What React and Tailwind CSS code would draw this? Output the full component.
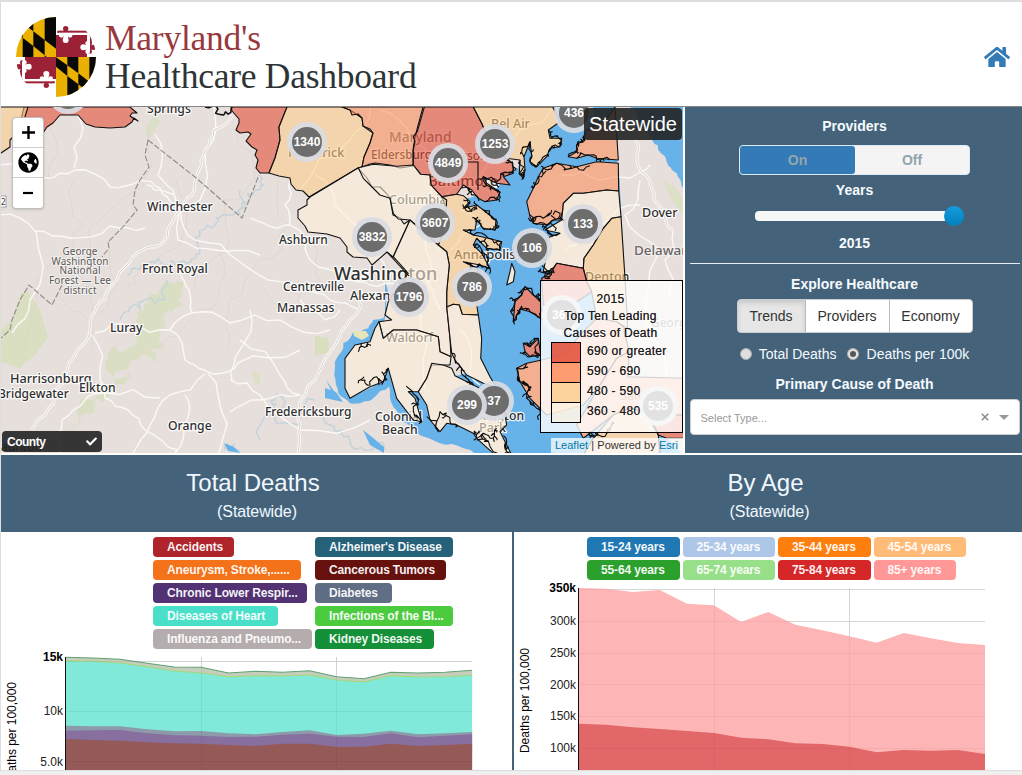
import React from "react";
import { FaCheck, FaGlobeAmericas, FaHome } from "react-icons/fa";

/* ---------- geometry helpers ---------- */

function makeRandom(seed) {
  let s = seed;
  return () => {
    s = (s * 16807) % 2147483647;
    return s / 2147483647 - 0.5;
  };
}

// Midpoint displacement gives borders and shores a ragged outline.
function rough(points, depth, amount, seed) {
  const rnd = makeRandom(seed);
  let pts = points;
  for (let d = 0; d < depth; d++) {
    const next = [];
    for (let i = 0; i < pts.length - 1; i++) {
      const [x1, y1] = pts[i];
      const [x2, y2] = pts[i + 1];
      const k = rnd() * amount;
      next.push(pts[i], [(x1 + x2) / 2 - (y2 - y1) * k, (y1 + y2) / 2 + (x2 - x1) * k]);
    }
    next.push(pts[pts.length - 1]);
    pts = next;
  }
  return pts;
}

// Short creeks that branch off a shoreline.
function withCreeks(points, seed, length) {
  const rnd = makeRandom(seed * 7 + 3);
  return points.flatMap((p) => {
    if (rnd() < 0.05) return [p];
    const q = [p[0] + rnd() * length, p[1] + rnd() * length];
    const r = [q[0] + rnd() * length * 0.6, q[1] + rnd() * length * 0.6];
    return [p, q, r, q, p];
  });
}

const parse = (s) => s.trim().split(/\s+/).map((p) => p.split(",").map(Number));
// The bay region is digitised on a grid three times finer than the map.
const fine = (s) => parse(s).map(([x, y]) => [330 + x / 3, 105 + y / 3]);
const toPath = (pts) => "M" + pts.map((p) => p[0].toFixed(1) + " " + p[1].toFixed(1)).join("L");
const ring = (s) => toPath(parse(s)) + "Z";
const line = (s) => toPath(parse(s));
const shore = (s, seed, amount = 1.3, depth = 3) => toPath(rough(parse(s), depth, amount, seed));
const creeks = (s, seed, length = 7) => toPath(withCreeks(rough(fine(s), 2, 0.6, seed), seed, length));

const CREAM = "#fef0d9";
const TAN = "#fdcc8a";
const ORANGE = "#fc8d59";
const RED = "#e34a33";

const westCounties = [
  [RED, "24,107 20,124 34,134 43,133 47,127 53,123 60,115 78,115 86,124 95,127 110,128 125,127 132,122 134,118 138,121 130,116 132,113 137,113 130,107"],
  [TAN, "-2,107 28,107 24,120 20,130 13,137 10,140 10,147 -2,155"],
  [RED, "231,107 232,111 239,119 239,123 236,130 240,133 248,132 251,134 246,141 252,147 257,150 255,155 258,160 256,168 260,173 269,173 275,158 280,140 279,127 287,107"],
  [TAN, "287,107 279,127 280,140 275,158 269,173 279,176 290,178 291,184 296,190 303,191 309,197 358,168 362,167 364,157 370,143 373,133 363,126 362,118 350,110 342,107"],
  [ORANGE, "342,107 350,110 352,115 358,114 362,118 363,126 370,129 373,133 370,143 364,157 362,167 370,164 375,163 390,165 400,168 413,166 413,150 415,137 423,107"],
  [CREAM, "310,197 358,168 367,178 372,187 380,187 386,193 390,198 393,215 400,218 404,224 410,220 393,257 387,252 372,265 367,258 353,257 347,252 347,247 340,238 327,234 308,232 305,226 298,218 298,210 307,205 307,200"],
].map(([fill, s]) => [fill, parse(s)]);

const bayCounties = [
  [RED, "283,6 262,80 250,95 255,110 250,135 250,180 272,208 300,210 303,240 335,275 380,268 400,240 425,255 445,280 465,290 500,285 510,262 470,235 460,215 500,235 540,240 520,215 550,205 548,175 530,160 485,120 470,90 455,55 430,6"],
  [TAN, "430,6 455,55 470,90 485,120 530,160 570,165 568,205 580,220 585,195 582,155 600,110 605,150 600,170 620,185 650,155 660,130 690,125 695,100 660,100 655,75 690,50 668,6"],
  [TAN, "335,275 380,268 400,272 420,290 400,310 440,300 460,315 485,335 498,345 495,375 460,370 440,345 435,375 400,375 430,390 475,400 515,410 510,435 470,430 440,400 430,420 455,445 480,490 450,480 400,470 440,490 455,520 440,600 445,630 397,628 388,600 370,598 350,608 350,560 358,480 350,440 325,420 345,370 345,300"],
  [CREAM, "85,188 130,178 200,184 250,180 272,208 300,210 303,240 335,275 350,285 345,370 325,420 280,380 240,345 205,342 190,325 180,280 150,270 120,240 100,220"],
  [CREAM, "240,345 280,380 325,420 350,440 358,480 350,560 350,605 360,700 363,755 330,740 325,695 260,675 190,675 160,700 147,650 185,645 165,630 175,590 235,505 190,455"],
  [CREAM, "147,650 160,700 190,675 260,675 325,695 330,740 363,755 360,780 305,780 290,820 265,860 235,860 255,880 275,950 250,945 200,880 175,790 160,830 120,845 60,880 45,850 45,760 75,720 120,710 135,670"],
  [CREAM, "265,860 290,820 305,775 340,780 365,790 375,812 430,840 470,860 520,900 530,960 510,980 545,1050 490,1045 440,1000 430,985 380,960 350,955 330,980 300,945 290,900"],
  [CREAM, "350,605 370,598 388,600 397,628 445,630 455,700 452,760 480,815 500,850 460,835 410,810 375,765 365,745 360,700"],
  [ORANGE, "765,80 760,105 740,120 740,140 715,155 740,160 775,150 800,160 865,165 855,6 830,40"],
  [ORANGE, "865,175 800,170 740,185 680,175 640,190 625,215 610,250 590,290 600,335 610,355 650,360 670,345 690,345 700,310 700,295 730,265 760,265 830,255 866,258"],
  [CREAM, "866,258 830,255 760,265 730,265 700,295 695,345 645,375 690,385 650,400 650,450 640,500 665,495 680,475 760,490 762,460 790,420 820,370 845,340 873,335"],
  [CREAM, "545,475 555,500 550,530 530,540 540,500"],
  [TAN, "873,335 845,340 820,370 790,420 762,460 760,490 770,530 785,560 800,640 860,650 893,670 885,520"],
  [RED, "680,475 760,490 770,530 785,560 740,590 640,600 635,520 665,500"],
  [RED, "585,545 610,570 632,590 632,640 600,620 570,612 550,650 555,590 575,570"],
  [ORANGE, "590,775 635,765 700,750 760,680 800,640 860,650 880,665 897,740 860,760 810,840 760,900 650,930 600,880 570,830 560,790"],
  [RED, "580,715 600,725 625,700 632,750 600,755 585,740"],
  [ORANGE, "895,815 1064,820 1064,930 960,930 900,910 850,930 760,1000 740,960 810,840 860,760 897,740"],
  [TAN, "790,1000 850,930 900,910 945,920 985,990 990,1050 760,1050"],
  [RED, "960,930 1064,930 1064,1000 1010,1000 985,990"],
].map(([fill, s]) => [fill, fine(s)]);

const countyPaths = [...westCounties, ...bayCounties].map(([fill, pts]) => [fill, toPath(pts) + "Z"]);

const coasts = [
  creeks("400,285 420,295 405,310 430,315 440,300", 41, 6),
  creeks("460,315 485,335 498,345 495,375 460,370 440,345 435,340", 97, 5),
  creeks("400,375 430,390 475,400 515,410 510,435 470,430 440,400", 913, 6),
  creeks("430,420 455,445 480,490 450,480 410,475", 321, 7),
  creeks("395,250 415,255 425,270 445,280", 77, 6),
  creeks("465,290 500,285 510,262 480,245 460,215 500,235", 661, 6),
  creeks("500,230 540,205 550,195 548,175 530,165", 88, 7),
  creeks("570,165 568,205 580,220 585,195", 1234, 4),
  creeks("582,155 600,110 605,150 600,170 620,185 650,150", 211, 5),
  creeks("655,140 685,125 695,105 665,98 655,75", 311, 5),
  creeks("770,85 745,110 740,140 715,155", 811, 6),
  creeks("740,160 775,150 800,163 840,165", 555, 4),
  creeks("780,182 740,185 680,175 640,190 625,215 610,250", 556, 5),
  creeks("600,330 610,355 650,360 670,345 690,325", 656, 12),
  creeks("605,350 640,340 665,315", 515, 10),
  creeks("690,385 650,370 640,365", 711, 8),
  creeks("635,480 645,520 665,500 630,500", 1717, 10),
  creeks("585,545 610,570 632,590 632,640 600,620 570,612 550,650 555,590 575,570 585,545", 1811, 8),
  creeks("580,715 600,725 625,700 632,750 600,755 585,740", 1911, 8),
  creeks("590,775 560,790 570,830 600,850", 2011, 8),
  creeks("575,830 590,880 620,910 625,945", 2111, 6),
  creeks("85,740 100,725 115,718", 2211, 5),
  creeks("85,835 105,825 120,840 140,815 160,830 175,790", 2311, 5),
  creeks("235,860 255,870 265,900 250,905 275,950", 2411, 8),
  creeks("290,935 325,980 330,920 360,950 380,960", 2511, 8),
  creeks("365,745 375,765 395,790 410,820 430,840", 2611, 6),
  creeks("430,985 440,1000 460,985 490,1000 500,970", 2711, 8),
  creeks("440,1005 490,1040 540,1045 530,1010", 2811, 9),
  creeks("780,1000 800,990 830,985 850,950", 2911, 7),
];

const roads = [
  "236,107 214,130 205,150 199,170 192,195 181,210 170,225 160,245 143,250 125,267 108,290 97,306 90,330 75,355 55,390 45,415 32,430",
  "362,290 350,320 335,345 322,365 305,395 300,425 298,453",
  "634,138 637,160 646,175 654,200 665,218 673,230",
  "214,107 205,150 200,200 181,210 195,240 240,262 300,285 330,300 360,310",
  "0,165 45,178 75,170 110,187 140,180 160,188 175,205",
  "0,215 35,231 70,238 110,226 145,228",
  "65,107 83,128 74,168",
  "36,231 30,300 12,333",
  "147,185 155,190 175,195",
  "155,134 158,175 173,190 178,240 215,250 260,255",
  "95,333 130,327 170,330 192,313 189,290 180,270",
  "192,313 230,323 280,320 330,330",
  "92,335 100,380 105,398 128,410 145,430 178,450",
  "170,330 185,360 205,370 215,374 238,363 300,350",
  "205,374 170,395 150,425 133,453",
  "208,374 218,395 219,453",
  "185,395 187,420 175,453",
  "60,453 62,420 85,400 105,393 160,398",
  "230,380 260,395 300,430 370,420",
  "240,340 280,375 300,395 260,400 230,412",
  "290,180 285,205 290,225 275,228 250,218",
  "290,225 310,260 345,280 370,285 400,285",
  "315,175 335,205 365,230 385,265",
  "370,107 350,140 300,190",
  "380,110 410,140 440,170 435,220 440,250",
  "410,225 430,260 425,300 422,330 425,390",
  "395,270 430,285 440,310",
  "460,210 480,225 450,250",
  "490,160 450,190 420,215",
  "552,107 520,130 500,150",
  "565,250 575,245 600,225 640,205",
  "640,180 625,215 660,250 655,340 670,420",
  "673,230 665,260 670,300",
  "562,175 600,180 630,178 650,165",
  "340,310 325,320 300,300",
  "250,310 240,350 232,380",
  "460,330 470,370 480,385",
];

const streams = [
  "240,190 228,215 212,228 200,250 180,262 150,262 128,275",
  "167,280 145,300 120,320",
  "260,176 255,190 240,215",
  "300,420 330,425 350,440 385,450",
  "260,440 300,425",
  "225,450 240,453",
  "315,400 280,395 275,410",
];

const markers = [
  [68, 94, "2091"], [307, 142, "1340"], [448, 163, "4849"], [495, 144, "1253"], [574, 113, "436"],
  [435, 223, "3607"], [372, 237, "3832"], [583, 224, "133"], [532, 248, "106"], [472, 287, "786"],
  [409, 297, "1796"], [494, 401, "37"], [467, 405, "299"], [562, 315, "361"], [658, 406, "535"],
];

// x, y, text, size
const labels = [
  [147, 113, "Springs", 12.2], [147, 211, "Winchester", 12.2], [142, 273, "Front Royal", 12.2],
  [110, 332, "Luray", 12.2], [10, 383, "Harrisonburg", 12.7], [79, 392, "Elkton", 12.2],
  [-2, 398, "Bridgewater", 12], [168, 430, "Orange", 12.2], [279, 244, "Ashburn", 12],
  [283, 291, "Centreville", 12], [277, 312, "Manassas", 12.2], [350, 300, "Alexandria", 12.500],
  [265, 416, "Fredericksburg", 12], [375, 421, "Colonial", 12.2], [382, 434, "Beach", 12.2],
  [334, 280, "Washington", 18], [288, 157, "Frederick", 12.7], [371, 159, "Eldersburg", 11.7],
  [389, 204, "Columbia", 12.7], [428, 186, "Baltimore", 15], [386, 342, "Waldorf", 12.5],
  [454, 259, "Annapolis", 13], [491, 128, "Bel Air", 12.5], [642, 217, "Dover", 12.5],
  [585, 281, "Denton", 12.5], [466, 420, "Lexington", 12.2], [479, 432, "Park", 12.5],
  [620, 400, "Salisbury", 12.5], [441, 160, "Parkson", 12],
];

const softLabels = [
  [389, 142, "Maryland", 13.8], [634, 255, "Delaware", 13.4], [651, 327, "Georgetown", 12],
];

function MapView() {
  return (
    <svg className="block h-full w-full" viewBox="1 107 682 346">
      <rect x="1" y="107" width="682" height="346" fill="#e6dfdb" />
      <g fill="#d7dfbd">
        <path d={ring("27,290 40,310 48,337 35,355 20,368 1,362 1,330 12,320 20,295")} opacity=".85" />
        <path d={shore("170,283 182,287 180,302 168,310 165,330 150,350 155,362 130,375 110,395 90,415 75,432 65,428 80,400 105,390 128,372 105,362 122,352 140,330 143,310 158,295 170,283", 19, 0.8) + "Z"} opacity=".8" />
        <path d={ring("155,112 160,122 148,140 145,130")} opacity=".7" />
        <path d={ring("315,336 328,338 329,352 315,356")} />
        <path d={ring("252,371 259,372 260,383 255,385")} opacity=".7" />
      </g>
      <g fill="none" stroke="#c3d3dc" strokeWidth="1.4">
        {streams.map((s, i) => <path key={i} d={shore(s, 500 + i * 37, 0.9)} />)}
      </g>
      <g fill="none" stroke="#dad2cd" strokeWidth=".7">
        {[0, 1, 2, 3, 4, 5, 6, 7, 8].map((i) => (
          <path key={i} d={shore(`${40 + i * 34},${120 + (i % 3) * 60} ${20 + i * 34},${200 + (i % 3) * 60} ${-10 + i * 34},${290 + (i % 2) * 60}`, 90 + i * 13, 0.5)} />
        ))}
      </g>

      {/* water */}
      <g fill="#68b2ea">
        <path d={toPath(rough(fine("165,530 168,600 160,640 130,645 115,670 70,680 40,715 20,760 13,810 25,865 60,895 100,890 130,880 178,845 190,905 215,950 260,985 330,1015 400,1030 480,1055 1064,1055 897,830 885,520 855,6 668,6 600,110 500,250 335,275 440,500 450,700 420,800 300,860 230,860 175,790 60,880 45,760 120,710 165,640"), 2, 0.25, 23)) + "Z"} />
        <path d={ring("224,443 234,447 240,453 228,451")} />
        <path d={ring("363,430 372,437 384,447 384,453 370,445")} />
        <path d={ring("325,388 336,392 343,402 325,398")} />
        <path d={ring("326,380 337,395 332,392")} />
      </g>
      <path d={ring("353,331 366,331 369,336 362,340 354,336")} fill="#e8e4b9" />
      <path d={toPath(fine("855,6 865,165 885,520 895,815 1064,825 1064,6")) + "Z"} fill="#e6dfdb" />
      <path d={shore("646,133 652,140 660,152 672,170 684,190 684,107 630,107 646,133", 31, 0.3) + "Z"} fill="#68b2ea" />
      <path d={ring("662,180 676,188 683,200 683,215 672,200")} fill="#d7dfbd" opacity=".7" />
      <g fill="#e6dfdb">
        {countyPaths.map(([, d], i) => <path key={i} d={d} />)}
      </g>

      {/* roads */}
      <g fill="none" strokeLinejoin="round">
        {roads.map((r, i) => (
          <path key={i} d={shore(r, 300 + i * 17, 0.3, 2)} stroke="#fbf9f7" strokeWidth={i < 3 ? 3 : 1.4} />
        ))}
        {roads.slice(0, 3).map((r, i) => (
          <path key={i} d={shore(r, 300 + i * 17, 0.3, 2)} stroke="#cfc8c4" strokeWidth=".8" />
        ))}
      </g>
      <g fill="none" stroke="#8f8b89" strokeWidth="1.1" strokeDasharray="6 2">
        <path d={line("148,140 195,177 242,218 259,175")} />
        <path d={line("148,140 145,155 149,167 140,180 135,190 133,205 137,210 122,228 108,242 109,248 102,257")} />
        <path d={line("62,285 52,305 29,285 20,300 12,320 10,330 1,338")} />
      </g>

      {/* place names */}
      <g fontFamily="'Noto Sans', 'Open Sans', sans-serif" stroke="#fff" strokeOpacity=".85" paintOrder="stroke" strokeWidth="2.6" strokeLinejoin="round" fontWeight="500">
        {labels.map(([x, y, t, s], i) => <text key={i} x={x} y={y} fontSize={s} fill="#2f2f2f">{t}</text>)}
        {softLabels.map(([x, y, t, s], i) => <text key={i} x={x} y={y} fontSize={s} fill="#6b6767" strokeOpacity=".4">{t}</text>)}
      </g>
      <g fontFamily="'Noto Sans', 'Open Sans', sans-serif" fontSize="10" fill="#5c5959" textAnchor="middle" stroke="#fff" strokeOpacity=".5" paintOrder="stroke" strokeWidth="2">
        <text x="80" y="254.500" textLength="35">George</text>
        <text x="80" y="264.500" textLength="57">Washington</text>
        <text x="80" y="274" textLength="41">National</text>
        <text x="80" y="283.500" textLength="62">Forest — Lee</text>
        <text x="80" y="293.500" textLength="33">district</text>
      </g>
      <text x="1" y="451" fontFamily="'Noto Sans', sans-serif" fontSize="12" fill="#222">aunton</text>
      <rect x="-6" y="196" width="12" height="11" fill="#fff" stroke="#888" strokeWidth=".7" />
      <text x="1" y="205" fontFamily="'Noto Sans', sans-serif" fontSize="8" fill="#333">2</text>

      {/* county shading */}
      <g fillOpacity=".58" stroke="#111" strokeWidth="1.1" strokeLinejoin="round">
        {countyPaths.map(([fill, d], i) => <path key={i} d={d} fill={fill} />)}
      </g>
      <g fill="none" stroke="#0c0c0c" strokeWidth="1.1" strokeLinejoin="round">
        {coasts.map((d, i) => <path key={i} d={d} />)}
        <path d="M462 162H478V190M387 252L409 276" />
        <path d={shore("205,107 218,109 232,107", 13, 1.3)} strokeWidth="1.5" />
      </g>

      {/* clusters */}
      <g fontFamily="'Liberation Sans', Arial, sans-serif" fontSize="12" fontWeight="700" fill="#fff" textAnchor="middle">
        {markers.map(([x, y, t], i) => (
          <g key={i}>
            <circle cx={x} cy={y} r="20" fill="#d9dbe2" fillOpacity=".93" />
            <circle cx={x} cy={y} r="15" fill="#6d6d6d" />
            <text x={x} y={y + 4.300}>{t}</text>
          </g>
        ))}
      </g>
    </svg>
  );
}

function Logo() {
  return (
    <svg className="h-[82px] w-[82px] shrink-0" viewBox="45 48 246 246">
      <defs>
        <clipPath id="seal"><circle cx="168" cy="171" r="120" /></clipPath>
      </defs>
      <g clipPath="url(#seal)">
        <rect x="48" y="50" width="120" height="121" fill="#eab102" />
        <rect x="168" y="171" width="120" height="121" fill="#eab102" />
        <g fill="#080808">
          <path d="M134 50H168V146L134 120Z" />
          <path d="M100 94L134 120V166L100 138Z" />
          <path d="M68 50H100V94L68 70Z" />
          <path d="M68 113L100 138V171H68Z" />
          <path d="M134 166L140 171H134Z" />
          <path d="M48 55L68 70V113L48 98Z" />
          <path d="M168 172L202 196V228L168 200Z" />
          <path d="M202 171H235V220L202 196Z" />
          <path d="M202 228L235 253V292H202Z" />
          <path d="M235 220L268 245V278L235 253Z" />
          <path d="M268 171H290V261L268 245Z" />
        </g>
        <rect x="168" y="50" width="120" height="121" fill="#fff" />
        <rect x="48" y="171" width="120" height="121" fill="#fff" />
        <g id="cross">
          <g fill="#9b2137">
            <rect x="168" y="105" width="93" height="66" />
            <rect x="172" y="92" width="101" height="7" />
            <rect x="267" y="95" width="8" height="57" />
            <circle cx="197" cy="86" r="8" />
            <circle cx="183" cy="98" r="6" /><circle cx="210" cy="98" r="6" />
            <circle cx="280" cy="142" r="8" />
            <circle cx="270" cy="128" r="6" /><circle cx="270" cy="155" r="6" />
          </g>
          <g fill="#fff">
            <rect x="176" y="98" width="92" height="7" />
            <rect x="261" y="99" width="9" height="54" />
            <circle cx="197" cy="120" r="9" /><rect x="190" y="104" width="14" height="14" />
            <circle cx="184" cy="106" r="7" /><circle cx="210" cy="106" r="7" />
            <circle cx="250" cy="142" r="9" /><rect x="250" y="135" width="14" height="14" />
            <circle cx="263" cy="130" r="7" /><circle cx="263" cy="155" r="7" />
          </g>
        </g>
        <use href="#cross" transform="rotate(180 168 171)" />
      </g>
    </svg>
  );
}

/* ---------- charts ---------- */

const toPage = (values, left, step, top) => values.map((v, i) => [left + i * step, top + v / 3]);

function areaPath(points, floor) {
  const last = points[points.length - 1];
  return `${toPath(points)}L${last[0]} ${floor}L${points[0][0]} ${floor}Z`;
}

const causes = {
  top: [382, 384, 388, 400, 411, 412, 429, 424, 427, 422, 440, 446, 427, 429, 427, 421],
  heart: [393, 394, 399, 410, 423, 429, 440, 437, 438, 435, 450, 456, 437, 441, 440, 436],
  diabetes: [587, 589, 589, 598, 604, 603, 610, 613, 606, 601, 615, 611, 602, 613, 610, 606],
  respiratory: [602, 601, 600, 610, 616, 617, 621, 620, 614, 611, 620, 621, 610, 622, 617, 613],
  tumors: [627, 630, 632, 637, 640, 641, 645, 648, 641, 641, 651, 650, 641, 648, 645, 641],
};

const ages = {
  oldest: [414, 416, 426, 420, 461, 466, 516, 486, 524, 541, 559, 578, 549, 565, 579, 585],
  older: [821, 824, 832, 837, 843, 849, 863, 868, 880, 882, 890, 907, 900, 902, 900, 912],
};

function CausesChart() {
  const p = (k) => toPage(causes[k], 66, 27.07, 530);
  const grid = "M66 661.500H472M66 711.500H472M66 761.500H472M201.500 657V770M336.500 657V770";
  return (
    <svg className="block h-[118px] w-[511px]" viewBox="1 652 511 118">
      <path d={grid} stroke="#dfdfdf" fill="none" />
      <path d={areaPath(p("top"), 770)} fill="#c6cdbb" />
      <path d={areaPath(p("heart"), 770)} fill="#80e9d9" />
      <path d={areaPath(p("diabetes"), 770)} fill="#8d9aa9" />
      <path d={areaPath(p("respiratory"), 770)} fill="#876fa0" />
      <path d={areaPath(p("tumors"), 770)} fill="#955a57" />
      <path d={toPath(p("top"))} stroke="#5ea276" strokeWidth="1.1" fill="none" />
      <path d={toPath(p("heart"))} stroke="#a0db79" strokeWidth="1.1" fill="none" />
      <path d={grid} stroke="#000" strokeOpacity=".05" fill="none" />
      <path d="M65.500 657V770" stroke="#111" />
      <g fontFamily="'Liberation Sans', Arial, sans-serif" fontSize="12" fill="#222" textAnchor="end">
        <text x="63" y="661" fontWeight="700" fill="#000">15k</text>
        <text x="63" y="715">10k</text>
        <text x="63" y="766">5.0k</text>
      </g>
      <text transform="translate(16 787) rotate(-90)" fontFamily="'Liberation Sans', Arial, sans-serif" fontSize="12" fill="#000" textLength="105">Deaths per 100,000</text>
    </svg>
  );
}

function AgesChart() {
  const p = (k) => toPage(ages[k], 578.5, 27.1, 450);
  const grid = "M579 589.500H985M579 621.500H985M579 653.500H985M579 684.500H985M579 716.500H985M579 748.500H985M714.500 588V770M849.500 588V770";
  return (
    <svg className="block h-[188px] w-[508px]" viewBox="514 582 508 188">
      <path d={grid} stroke="#dfdfdf" fill="none" />
      <path d={areaPath(p("oldest"), 770)} fill="#feb5b5" />
      <path d={areaPath(p("older"), 770)} fill="#e16769" />
      <path d={grid} stroke="#000" strokeOpacity=".04" fill="none" />
      <path d="M578.500 588V770" stroke="#111" />
      <g fontFamily="'Liberation Sans', Arial, sans-serif" fontSize="12" fill="#222" textAnchor="end">
        <text x="576" y="592" fontWeight="700" fill="#000">350k</text>
        <text x="576" y="625">300k</text>
        <text x="576" y="657">250k</text>
        <text x="576" y="689">200k</text>
        <text x="576" y="720">150k</text>
        <text x="576" y="752">100k</text>
      </g>
      <text transform="translate(529 753) rotate(-90)" fontFamily="'Liberation Sans', Arial, sans-serif" fontSize="12" fill="#000" textLength="105">Deaths per 100,000</text>
    </svg>
  );
}

function Pill({ className, children }) {
  return (
    <div className={`h-5 whitespace-nowrap rounded pl-[14px] text-[12px] font-bold leading-[21px] tracking-[-0.15px] text-white/95 ${className}`}>
      {children}
    </div>
  );
}

function SectionTitle({ title, className }) {
  return (
    <div className={`flex h-[77px] flex-col items-center bg-[#44637b] pt-[12px] text-[#f0f8ff] ${className}`}>
      <h2 className="text-[24px] leading-8">{title}</h2>
      <p className="ml-[8px] mt-[3px] text-[16px] leading-5 tracking-[-0.1px]">(Statewide)</p>
    </div>
  );
}

export default function App() {
  return (
    <div className="h-[775px] w-[1022px] overflow-hidden bg-white font-['Liberation_Sans',Arial,sans-serif] text-[14px] leading-5">
      <div className="h-[770px] overflow-hidden border-l border-t-2 border-[#dedede]">
        <header className="flex h-[105px] items-center border-b border-[#858585] pl-[14px] pt-[5px]">
          <Logo />
          <h1 className="ml-[8px] font-['Liberation_Serif',serif] text-[35.500px] leading-[38px] tracking-[-0.25px] text-[#2d3436]">
            <span className="block text-[#97393e]">Maryland's</span>
            <span className="block whitespace-nowrap">Healthcare Dashboard</span>
          </h1>
          <FaHome className="ml-auto mr-[12px] h-[24px] w-[26px] text-[#337ab7]" />
        </header>

        <section className="flex h-[346px]">
          <div className="relative h-[346px] w-[682px] shrink-0 overflow-hidden">
            <MapView />
            <div className="absolute left-[11px] top-[10px] w-[32px] divide-y divide-[#ccc] rounded border border-black/25 bg-white text-black shadow-sm">
              <div className="flex h-[30px] items-center justify-center">
                <svg viewBox="0 0 12 12" className="size-[13px]"><path d="M0 6H12M6 0V12" stroke="#000" strokeWidth="2.2" /></svg>
              </div>
              <div className="flex h-[30px] items-center justify-center">
                <FaGlobeAmericas className="size-[21px]" />
              </div>
              <div className="flex h-[30px] items-center justify-center">
                <svg viewBox="0 0 12 12" className="size-3"><path d="M1 6H11" stroke="#000" strokeWidth="2.2" /></svg>
              </div>
            </div>
            <div className="absolute right-[1px] top-px h-[32px] w-[98px] rounded bg-[#222]/90 text-center text-[20px] leading-[32px] text-white">
              Statewide
            </div>
            <div className="absolute left-px top-[324px] flex h-[21px] w-[100px] items-center justify-between rounded-sm bg-[#222]/90 pl-[5px] pr-[5px] text-[12px] font-bold tracking-[-0.5px] text-white">
              <span>County</span>
              <FaCheck className="size-[11px]" />
            </div>
            <div className="absolute left-[539px] top-[173px] h-[153px] w-[143px] border border-black bg-white/80 pt-[10px] text-[12px] leading-[17px] tracking-[0.3px] text-[#1c1c1c]">
              <div className="pr-[2px] text-center [text-shadow:0_0_0.5px_#555]">
                2015<br />Top Ten Leading<br />Causes of Death
              </div>
              <div className="ml-[10px] flex gap-[6px] leading-5">
                <div className="w-[30px] border border-black">
                  <div className="h-[19px] bg-[#e34a33]/85" />
                  <div className="h-5 border-t border-black bg-[#fc8d59]/85" />
                  <div className="h-5 border-t border-black bg-[#fdcc8a]/80" />
                  <div className="h-5 border-t border-black bg-[#fef0d9]/60" />
                </div>
                <div className="-mt-px whitespace-nowrap [text-shadow:0_0_0.5px_#555]">
                  <p>690 or greater</p>
                  <p>590 - 690</p>
                  <p>480 - 590</p>
                  <p>360 - 480</p>
                </div>
              </div>
            </div>
            <div className="absolute bottom-0 right-0 h-[15px] whitespace-nowrap bg-white/75 pl-[4px] pr-[5px] text-[11px] leading-[15px] tracking-[0.04px] text-[#333]">
              <span className="text-[#0078a8]">Leaflet</span> | Powered by <span className="text-[#0078a8]">Esri</span>
            </div>
          </div>

          <aside className="ml-[2px] flex flex-1 flex-col items-center bg-[#44637b] pl-[2px] text-[#f5faff]">
            <h3 className="mt-[9px] font-bold">Providers</h3>
            <div className="mt-[9px] flex h-[30px] w-[231px] rounded border border-[#dcebf5] bg-[#f4f4f4] text-center font-bold leading-7 text-[#93a5ad]">
              <div className="w-[115px] rounded-[3px] bg-[#337ab7]">On</div>
              <div className="flex-1">Off</div>
            </div>
            <h3 className="mt-[5px] font-bold">Years</h3>
            <div className="ml-[10px] mt-[6px] flex h-5 w-[209px] items-center">
              <div className="h-[10px] w-[190px] rounded-l bg-[#f6f8f8]" />
              <div className="-ml-[1px] size-5 rounded-full bg-linear-to-b from-[#149bdf] to-[#0480be]" />
            </div>
            <h3 className="mt-[7px] font-bold">2015</h3>
            <div className="mt-[10px] h-px w-[330px] bg-[#e6eef3]" />
            <h3 className="mt-[10px] font-bold">Explore Healthcare</h3>
            <div className="mt-[5px] flex h-[34px] w-[236px] divide-x divide-[#bbb] overflow-hidden rounded border border-[#ccc] bg-white text-center leading-8 text-[#333]">
              <div className="w-[68px] bg-[#e6e6e6] shadow-[inset_0_3px_5px_rgba(0,0,0,0.125)]">Trends</div>
              <div className="w-[84px]">Providers</div>
              <div className="flex-1">Economy</div>
            </div>
            <div className="mt-[11px] flex items-center whitespace-nowrap">
              <span className="mr-[7px] size-[12px] rounded-full border border-[#aaa] bg-[#dedede]" />
              Total Deaths
              <span className="ml-[10px] mr-[8px] flex size-[12px] items-center justify-center rounded-full border border-[#aaa] bg-[#e4e4e4]">
                <span className="size-[6px] rounded-full bg-[#555]" />
              </span>
              Deaths per 100k
            </div>
            <h3 className="mt-[10px] font-bold">Primary Cause of Death</h3>
            <div className="mt-[5px] flex h-[36px] w-[330px] items-center rounded border border-[#ccc] bg-white pl-[10px] pr-[10px] text-[11px] text-[#999]">
              <span className="mr-auto pt-px">Select Type...</span>
              <svg viewBox="0 0 8 8" className="size-2"><path d="M.8.8L7.200 7.200M7.200.8L.8 7.200" stroke="#888" strokeWidth="1.500" /></svg>
              <svg viewBox="0 0 10 5" className="ml-[10px] h-[5px] w-[10px]"><path d="M0 0H10L5 5Z" fill="#999" /></svg>
            </div>
          </aside>
        </section>

        <section className="mt-[2px] flex">
          <div className="w-[511px]">
            <SectionTitle title="Total Deaths" className="pr-[7px]" />
            <div className="ml-[152px] flex h-[120px] pt-[5px]">
              <div className="flex w-[162px] flex-col gap-[3px]">
                <Pill className="w-[81px] bg-[#b0242b]">Accidents</Pill>
                <Pill className="w-[148px] bg-[#f47219]">Aneurysm, Stroke,......</Pill>
                <Pill className="w-[154px] bg-[#523273]">Chronic Lower Respir...</Pill>
                <Pill className="w-[125px] bg-[#49dfc9]">Diseases of Heart</Pill>
                <Pill className="w-[159px] bg-[#b5adad]">Influenza and Pneumo...</Pill>
              </div>
              <div className="flex flex-col gap-[3px]">
                <Pill className="w-[138px] bg-[#256179] tracking-[-0.4px]">Alzheimer's Disease</Pill>
                <Pill className="w-[131px] bg-[#67110f] tracking-[-0.4px]">Cancerous Tumors</Pill>
                <Pill className="w-[77px] bg-[#5f6e85] tracking-[-0.4px]">Diabetes</Pill>
                <Pill className="w-[138px] bg-[#4ccb3f] tracking-[-0.4px]">Infections of the Bl...</Pill>
                <Pill className="w-[119px] bg-[#149038] tracking-[-0.4px]">Kidney Diseases</Pill>
              </div>
            </div>
            <CausesChart />
          </div>
          <div className="w-[510px] border-l-2 border-[#44637b]">
            <SectionTitle title="By Age" className="pr-[5px]" />
            <div className="ml-[73px] grid h-[50px] grid-cols-[repeat(4,92.500px)] content-start gap-[3px] pt-[5px]">
              <Pill className="bg-[#1f77b4]">15-24 years</Pill>
              <Pill className="bg-[#aec7e8]">25-34 years</Pill>
              <Pill className="bg-[#ff7f0e]">35-44 years</Pill>
              <Pill className="bg-[#ffbb78]">45-54 years</Pill>
              <Pill className="bg-[#2ca02c]">55-64 years</Pill>
              <Pill className="bg-[#98df8a]">65-74 years</Pill>
              <Pill className="bg-[#d62728]">75-84 years</Pill>
              <Pill className="w-[82px] bg-[#ff9896]">85+ years</Pill>
            </div>
            <AgesChart />
          </div>
        </section>
      </div>
      <footer className="h-[5px] border-t border-[#ddd] bg-[#efefef]" />
    </div>
  );
}
